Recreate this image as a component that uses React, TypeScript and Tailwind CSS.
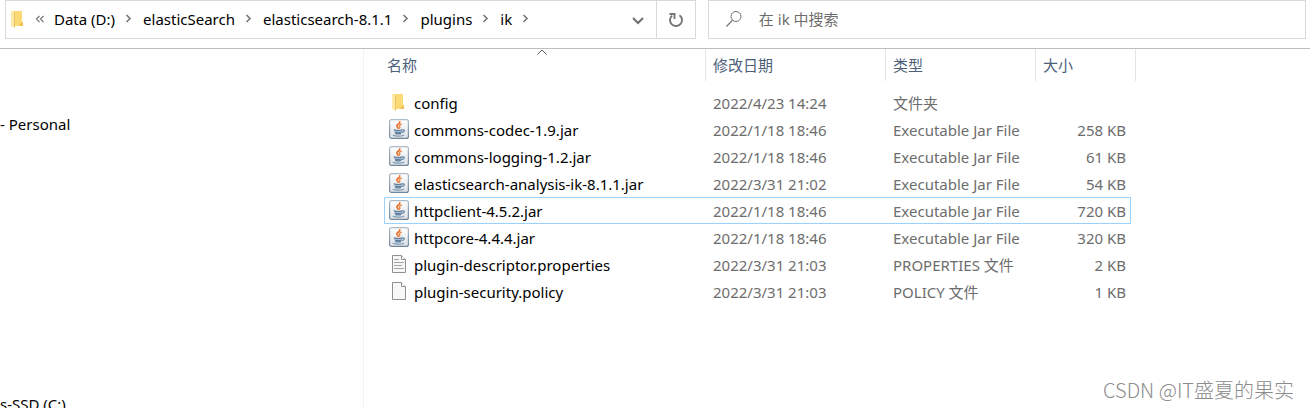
import React from 'react';

interface FileEntry {
    name: string;
    date: string;
    type: string;
    size?: string;
    icon: 'folder' | 'jar' | 'text' | 'blank';
    focused?: boolean;
}

const files: FileEntry[] = [
    { name: 'config', date: '2022/4/23 14:24', type: '文件夹', icon: 'folder' },
    { name: 'commons-codec-1.9.jar', date: '2022/1/18 18:46', type: 'Executable Jar File', size: '258 KB', icon: 'jar' },
    { name: 'commons-logging-1.2.jar', date: '2022/1/18 18:46', type: 'Executable Jar File', size: '61 KB', icon: 'jar' },
    { name: 'elasticsearch-analysis-ik-8.1.1.jar', date: '2022/3/31 21:02', type: 'Executable Jar File', size: '54 KB', icon: 'jar' },
    { name: 'httpclient-4.5.2.jar', date: '2022/1/18 18:46', type: 'Executable Jar File', size: '720 KB', icon: 'jar', focused: true },
    { name: 'httpcore-4.4.4.jar', date: '2022/1/18 18:46', type: 'Executable Jar File', size: '320 KB', icon: 'jar' },
    { name: 'plugin-descriptor.properties', date: '2022/3/31 21:03', type: 'PROPERTIES 文件', size: '2 KB', icon: 'text' },
    { name: 'plugin-security.policy', date: '2022/3/31 21:03', type: 'POLICY 文件', size: '1 KB', icon: 'blank' },
];

const crumbs = ['Data (D:)', 'elasticSearch', 'elasticsearch-8.1.1', 'plugins', 'ik'];

const FolderIcon: React.FC = () => (
    <svg width="20" height="20" viewBox="1 0 20 20" aria-hidden="true">
        <path d="M5 2h10v12h1v3H5z" fill="#fbd975" />
        <path d="M15 13h1v4h-4z" fill="#efc252" />
        <path d="M4 2l4 2v15l-4-2z" fill="#ffe9a6" />
        <path d="M7.5 4v14.5" stroke="#e9c566" strokeWidth="1" />
    </svg>
);

const JarIcon: React.FC = () => (
    <svg width="20" height="20" viewBox="0 0 20 20" aria-hidden="true">
        <defs>
            <linearGradient id="jarFace" x1="0" y1="0" x2="0" y2="1">
                <stop offset="0" stopColor="#ffffff" />
                <stop offset="1" stopColor="#dce0e5" />
            </linearGradient>
            <linearGradient id="jarEdge" x1="0" y1="0" x2="0" y2="1">
                <stop offset="0" stopColor="#adbbc9" />
                <stop offset="1" stopColor="#71869b" />
            </linearGradient>
        </defs>
        <rect x="0.6" y="0.6" width="18.8" height="18.8" rx="2" fill="url(#jarFace)" stroke="url(#jarEdge)" strokeWidth="1.2" />
        <g fill="none" strokeLinecap="round">
            <path d="M10.800 2.800c.8 1.800-3.500 2.500-2.900 4.300.3.900 1.300 1.300 1.100 2.200" stroke="#e8702a" strokeWidth="1.700" />
            <path d="M12.400 5.200c-2 .8-2.400 1.500-1.700 2.300.4.600.2 1.200-.4 1.700" stroke="#ec8243" strokeWidth="1.300" />
            <path d="M5.200 10.900c2 .7 5.800.7 7.800 0M6 12.800c1.800.6 4.800.6 6.600 0M6.700 14.500c1.500.4 3.500.4 5 0" stroke="#5c7f9f" strokeWidth="1.300" />
            <path d="M13.600 11c2.300-.6 2.500 1.700-.2 2.400" stroke="#5c7f9f" strokeWidth="1.100" />
            <path d="M4.200 16.300c2.500 1.100 8 1.100 10.500-.1" stroke="#7d9ab4" strokeWidth="1.200" />
        </g>
    </svg>
);

const PageIcon: React.FC<{ lines?: boolean }> = ({ lines }) => (
    <svg width="20" height="20" viewBox="0 0 20 20" aria-hidden="true">
        <path d="M3.500 1.500h9l4 4v13h-13z" fill="#f8f8f8" stroke="#909090" />
        <path d="M12.500 1.500v4h4" fill="#ffffff" stroke="#909090" />
        {lines && <path d="M5 5.500h5M5 8.500h10M5 11.500h8M5 14.500h10" stroke="#a5a5a5" />}
    </svg>
);

const FileIcon: React.FC<{ kind: FileEntry['icon'] }> = ({ kind }) => {
    if (kind === 'folder') return <FolderIcon />;
    if (kind === 'jar') return <JarIcon />;
    return <PageIcon lines={kind === 'text'} />;
};

const Chevron: React.FC = () => (
    <svg className="mx-[9px] shrink-0" width="10" height="10" viewBox="0 0 10 10" aria-hidden="true">
        <path d="M2.500 1L6 4.500 2.500 8" fill="none" stroke="#777777" strokeWidth="1.600" />
    </svg>
);

const AddressBar: React.FC = () => (
    <header className="flex h-12 items-start gap-3 pr-1 pl-[5px]">
        <div className="flex h-[39px] flex-[691] border border-[#d9d9d9]">
            <nav aria-label="Path" className="flex flex-1 items-center pb-0.5 pl-0.5">
                <FolderIcon />
                <button aria-label="Parents" className="mx-[7px] h-6 w-3">
                    <svg width="10" height="10" viewBox="0 0 10 10" aria-hidden="true">
                        <path d="M4.500 2L1.500 5l3 3M8.500 2l-3 3 3 3" fill="none" stroke="#777777" strokeWidth="1.200" />
                    </svg>
                </button>
                {crumbs.map(crumb => (
                    <React.Fragment key={crumb}>
                        <button className="whitespace-nowrap">{crumb}</button>
                        <Chevron />
                    </React.Fragment>
                ))}
            </nav>
            <button aria-label="History" className="flex w-9 items-center justify-center">
                <svg width="14" height="14" viewBox="0 0 14 14" aria-hidden="true">
                    <path d="M2 5l5 5 5-5" fill="none" stroke="#707070" strokeWidth="2" />
                </svg>
            </button>
            <button aria-label="Refresh" className="flex w-[39px] items-center justify-center border-l border-[#d9d9d9]">
                <svg width="16" height="16" viewBox="0 0 16 16" aria-hidden="true">
                    <path d="M11.500 3.200A6 6 0 1 1 4 3.600" fill="none" stroke="#757575" strokeWidth="1.900" />
                    <path d="M1.500 2h5v5" fill="none" stroke="#757575" strokeWidth="1.900" />
                </svg>
            </button>
        </div>
        <label className="flex h-[39px] flex-[598] items-center border border-[#d9d9d9] pb-0.5">
            <svg className="ml-4 shrink-0" width="18" height="18" viewBox="0 0 18 18" aria-hidden="true">
                <circle cx="11" cy="6.500" r="5" fill="none" stroke="#707070" />
                <path d="M7.500 10.200L1.500 16.500" stroke="#707070" strokeWidth="1.200" />
            </svg>
            <input
                type="text"
                aria-label="Search"
                placeholder="在 ik 中搜索"
                className="ml-4 min-w-0 flex-1 outline-none placeholder:text-[#6d6d6d]"
            />
        </label>
    </header>
);

const FileTable: React.FC = () => (
    <table className="w-[747px] table-fixed border-separate border-spacing-0">
        <colgroup>
            <col />
            <col className="w-[180px]" />
            <col className="w-[150px]" />
            <col className="w-[96px]" />
        </colgroup>
        <thead className="text-left text-[#4c607a]">
            <tr className="h-10 align-top">
                <th className="p-0 font-normal">
                    <button className="relative block h-8 w-full pl-[3px] text-left">
                        名称
                        <svg className="absolute top-0 left-1/2 -ml-2" width="10" height="6" viewBox="0 0 10 6" aria-hidden="true">
                            <path d="M.5 5.500L5 1l4.500 4.500" fill="none" stroke="#606060" />
                        </svg>
                    </button>
                </th>
                <th className="p-0 font-normal">
                    <button className="block h-8 w-full border-l border-[#e5e5e5] pl-[7px] text-left">修改日期</button>
                </th>
                <th className="p-0 font-normal">
                    <button className="block h-8 w-full border-l border-[#e5e5e5] pl-[7px] text-left">类型</button>
                </th>
                <th className="p-0 font-normal">
                    <button className="block h-8 w-[101px] border-x border-[#e5e5e5] pl-[7px] text-left">大小</button>
                </th>
            </tr>
        </thead>
        <tbody className="text-[#6d6d6d]">
            {files.map(file => (
                <tr
                    key={file.name}
                    className={file.focused ? 'h-[27px] shadow-[inset_0_0_0_1px_#99d1ff]' : 'h-[27px]'}
                >
                    <td className="p-0 text-black">
                        <div className="flex items-start gap-[5px] pl-[5px]">
                            <FileIcon kind={file.icon} />
                            <span>{file.name}</span>
                        </div>
                    </td>
                    <td className="p-0 pl-2">{file.date}</td>
                    <td className="p-0 pl-2">{file.type}</td>
                    <td className="p-0 pr-[5px] text-right">{file.size}</td>
                </tr>
            ))}
        </tbody>
    </table>
);

const App: React.FC = () => {
    return (
        <div className="relative flex h-screen flex-col overflow-hidden bg-white font-['Noto_Sans','Noto_Sans_CJK_SC',sans-serif] text-[15px] leading-[22px] text-black">
            <AddressBar />
            <div className="flex min-h-0 flex-1 border-t border-[#bdbdbd]">
                <aside className="flex w-[364px] shrink-0 flex-col gap-[258px] border-r border-[#f2f2f2] pt-16">
                    <a href="#personal" className="whitespace-nowrap">- Personal</a>
                    <a href="#c" className="whitespace-nowrap">s-SSD (C:)</a>
                </aside>
                <main className="min-w-0 flex-1 pl-5">
                    <FileTable />
                </main>
            </div>
            <div className="absolute right-4 bottom-1 font-['Noto_Sans_CJK_SC',sans-serif] text-xl font-light text-[#8c8c8c]">
                CSDN @IT盛夏的果实
            </div>
        </div>
    );
};

export default App;
